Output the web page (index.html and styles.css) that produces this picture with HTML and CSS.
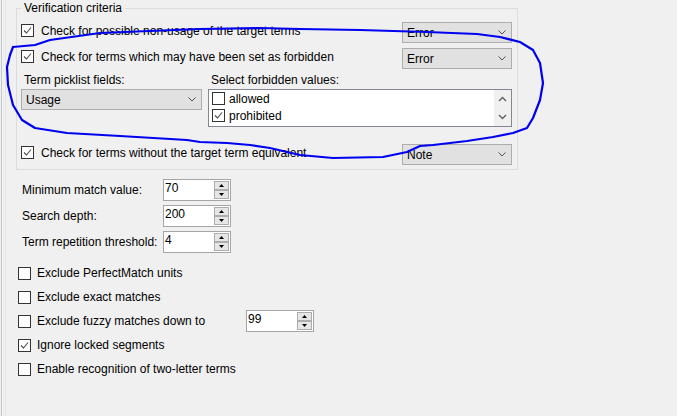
FILE: index.html
```html
<!DOCTYPE html>
<html>
<head>
<meta charset="utf-8">
<link rel="stylesheet" href="styles.css">
</head>
<body>
<div class="frame">
  <div class="pane">
    <fieldset class="group">
      <legend>Verification criteria</legend>
      <div class="row">
        <div class="chk"><span class="box"><svg viewBox="0 0 11 11" class="tick"><path d="M2 5.5 L4.5 8 L9 2.5"/></svg></span><span>Check for possible non-usage of the target terms</span></div>
        <div class="combo"><span>Error</span><svg class="chev" viewBox="0 0 8 5"><path d="M0.5 0.5 L4 4 L7.5 0.5"/></svg></div>
      </div>
      <div class="row r2">
        <div class="chk"><span class="box"><svg viewBox="0 0 11 11" class="tick"><path d="M2 5.5 L4.5 8 L9 2.5"/></svg></span><span>Check for terms which may have been set as forbidden</span></div>
        <div class="combo"><span>Error</span><svg class="chev" viewBox="0 0 8 5"><path d="M0.5 0.5 L4 4 L7.5 0.5"/></svg></div>
      </div>
      <div class="forbidden">
        <div class="fcol-left">
          <div class="lbl">Term picklist fields:</div>
          <div class="combo wide"><span>Usage</span><svg class="chev" viewBox="0 0 8 5"><path d="M0.5 0.5 L4 4 L7.5 0.5"/></svg></div>
        </div>
        <div class="fcol-right">
          <div class="lbl">Select forbidden values:</div>
          <div class="listbox">
            <div class="items">
              <div class="item"><span class="box"></span><span>allowed</span></div>
              <div class="item"><span class="box"><svg viewBox="0 0 11 11" class="tick"><path d="M2 5.5 L4.5 8 L9 2.5"/></svg></span><span>prohibited</span></div>
            </div>
            <div class="vscroll">
              <svg class="sarrow" viewBox="0 0 9 6"><path d="M1 5 L4.5 1.5 L8 5"/></svg>
              <svg class="sarrow" viewBox="0 0 9 6"><path d="M1 1 L4.5 4.5 L8 1"/></svg>
            </div>
          </div>
        </div>
      </div>
      <div class="row r3">
        <div class="chk"><span class="box"><svg viewBox="0 0 11 11" class="tick"><path d="M2 5.5 L4.5 8 L9 2.5"/></svg></span><span>Check for terms without the target term equivalent</span></div>
        <div class="combo"><span>Note</span><svg class="chev" viewBox="0 0 8 5"><path d="M0.5 0.5 L4 4 L7.5 0.5"/></svg></div>
      </div>
    </fieldset>

    <div class="spins">
      <div class="spinrow"><span class="slabel">Minimum match value:</span>
        <div class="spin"><span class="sval">70</span><div class="sbtns"><span class="sbtn"><svg viewBox="0 0 5 3"><path d="M0 3 L2.5 0 L5 3Z"/></svg></span><span class="sbtn"><svg viewBox="0 0 5 3"><path d="M0 0 L2.5 3 L5 0Z"/></svg></span></div></div>
      </div>
      <div class="spinrow"><span class="slabel">Search depth:</span>
        <div class="spin"><span class="sval">200</span><div class="sbtns"><span class="sbtn"><svg viewBox="0 0 5 3"><path d="M0 3 L2.5 0 L5 3Z"/></svg></span><span class="sbtn"><svg viewBox="0 0 5 3"><path d="M0 0 L2.5 3 L5 0Z"/></svg></span></div></div>
      </div>
      <div class="spinrow"><span class="slabel">Term repetition threshold:</span>
        <div class="spin"><span class="sval">4</span><div class="sbtns"><span class="sbtn"><svg viewBox="0 0 5 3"><path d="M0 3 L2.5 0 L5 3Z"/></svg></span><span class="sbtn"><svg viewBox="0 0 5 3"><path d="M0 0 L2.5 3 L5 0Z"/></svg></span></div></div>
      </div>
    </div>

    <div class="opts">
      <div class="opt"><span class="box"></span><span>Exclude PerfectMatch units</span></div>
      <div class="opt"><span class="box"></span><span>Exclude exact matches</span></div>
      <div class="opt"><div class="optlabel"><span class="box"></span><span>Exclude fuzzy matches down to</span></div>
        <div class="spin"><span class="sval">99</span><div class="sbtns"><span class="sbtn"><svg viewBox="0 0 5 3"><path d="M0 3 L2.5 0 L5 3Z"/></svg></span><span class="sbtn"><svg viewBox="0 0 5 3"><path d="M0 0 L2.5 3 L5 0Z"/></svg></span></div></div>
      </div>
      <div class="opt"><span class="box"><svg viewBox="0 0 11 11" class="tick"><path d="M2 5.5 L4.5 8 L9 2.5"/></svg></span><span>Ignore locked segments</span></div>
      <div class="opt"><span class="box"></span><span>Enable recognition of two-letter terms</span></div>
    </div>
  </div>
</div>
<svg class="scribble" viewBox="0 0 677 416" width="677" height="416">
  <polyline points="13,47 35,45 50,40 100,33 150,31 200,29 260,28 300,29 360,30 427,32 477,34 500,37 520,42 533,50 540,63 543,83 540,100 533,118 527,128 513,133 493,137 467,141 433,145 420,146 407,152 383,157 333,158 300,155 270,148 250,145 227,143 200,142 187,140 120,136 67,133 35,128 22,120 13,105 8,85 7,67 10,55 13,47"/>
</svg>
</body>
</html>
```
FILE: styles.css
```css
html, body {
  margin: 0;
  padding: 0;
}
body {
  width: 677px;
  height: 416px;
  overflow: hidden;
  position: relative;
  background: #f0f0f0;
  color: #000;
  font-family: "Liberation Sans", Arial, sans-serif;
  font-size: 12px;
  line-height: 16px;
}
.frame {
  margin-left: 1px;
  border-left: 1px solid #c4c9cf;
  height: 416px;
  box-sizing: border-box;
  padding-left: 3px;
}
.pane {
  border-left: 1px solid #e4e4e4;
  height: 100%;
  padding-left: 10px;
}
.group {
  margin: 0;
  width: 502px;
  min-width: 0;
  box-sizing: border-box;
  border: 1px solid #dcdcdc;
  padding: 6px 5px 4px 4px;
}
.group legend {
  padding: 0 3px;
  line-height: 16px;
}
.row {
  display: flex;
  align-items: flex-start;
  justify-content: space-between;
  height: 21px;
}
.r2 { margin-top: 5px; }
.r3 { margin-top: 17px; }
.chk {
  display: flex;
  align-items: center;
  gap: 7px;
  margin-top: 2px;
  height: 13px;
  white-space: nowrap;
}
.box {
  width: 13px;
  height: 13px;
  box-sizing: border-box;
  border: 1px solid #333;
  background: #fff;
  flex: none;
  display: block;
}
.tick {
  display: block;
  width: 11px;
  height: 11px;
  fill: none;
  stroke: #4a4a4a;
  stroke-width: 1.1;
}
.combo {
  width: 110px;
  height: 21px;
  box-sizing: border-box;
  border: 1px solid #adadad;
  background: #e1e1e1;
  display: flex;
  align-items: center;
  justify-content: space-between;
  padding: 0 5px 0 4px;
  flex: none;
}
.combo.wide { width: 181px; }
.chev {
  width: 8px;
  height: 5px;
  fill: none;
  stroke: #505050;
  stroke-width: 1;
}
.forbidden {
  display: flex;
  gap: 6px;
  margin-top: 3px;
}
.fcol-left { width: 181px; flex: none; }
.fcol-right { flex: 1; }
.lbl {
  line-height: 16px;
  padding-left: 3px;
  margin-bottom: 1px;
  white-space: nowrap;
}
.listbox {
  height: 38px;
  box-sizing: border-box;
  border: 1px solid #828790;
  background: #fff;
  display: flex;
}
.items { flex: 1; padding-left: 3px; }
.item {
  display: flex;
  align-items: center;
  gap: 4px;
  height: 17px;
}
.vscroll {
  width: 17px;
  background: #f0f0f0;
  display: flex;
  flex-direction: column;
  align-items: center;
  justify-content: space-around;
}
.sarrow {
  width: 9px;
  height: 6px;
  fill: none;
  stroke: #606060;
  stroke-width: 1.4;
}
.spins {
  margin: 9px 0 0 5px;
  display: flex;
  flex-direction: column;
  gap: 4px;
}
.spinrow {
  display: flex;
  align-items: center;
  height: 22px;
}
.slabel {
  width: 142px;
  padding-left: 1px;
  box-sizing: border-box;
  white-space: nowrap;
}
.spin {
  width: 68px;
  height: 22px;
  box-sizing: border-box;
  border: 1px solid #a5a5a5;
  background: #fff;
  display: flex;
  justify-content: space-between;
  padding: 1px;
  flex: none;
}
.sval {
  line-height: 15px;
}
.sbtns {
  display: flex;
  flex-direction: column;
}
.sbtn {
  width: 15px;
  height: 9px;
  box-sizing: border-box;
  border: 1px solid #adadad;
  background: #e6e6e6;
  display: flex;
  align-items: center;
  justify-content: center;
}
.sbtn svg {
  width: 5px;
  height: 3px;
  fill: #000;
}
.opts {
  margin: 8px 0 0 2px;
}
.opt {
  display: flex;
  align-items: center;
  gap: 6px;
  height: 24px;
  white-space: nowrap;
}
.optlabel {
  display: flex;
  align-items: center;
  gap: 6px;
  width: 228px;
  flex: none;
}
.opt .optlabel + .spin { margin-left: -6px; }
.scribble {
  position: absolute;
  left: 0;
  top: 0;
  pointer-events: none;
  fill: none;
  stroke: #0000f0;
  stroke-width: 2.2;
  stroke-linejoin: round;
  stroke-linecap: round;
}
```
